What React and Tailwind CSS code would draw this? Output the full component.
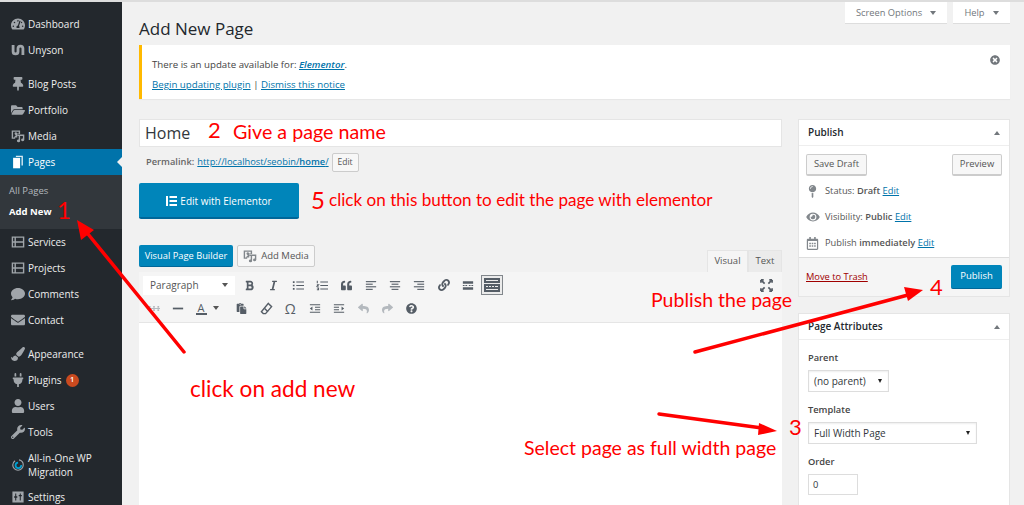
import {
  FaBold, FaItalic, FaQuoteLeft, FaLink,
  FaPaste, FaReply, FaShare, FaQuestionCircle, FaTimesCircle,
  FaTachometerAlt, FaThumbtack, FaFolderOpen, FaComment, FaEnvelope, FaPaintBrush, FaPlug, FaUser, FaWrench,
  FaEye, FaRegCalendarAlt, FaMapPin,
} from 'react-icons/fa';

const MediaIcon = ({ className }) => (
  <svg viewBox="0 0 20 20" className={className} fill="currentColor">
    <path fillRule="evenodd" d="M1 2h12v5H9v5H6v2H1zM3 4v8h1.500l1-2h1V8.500A2 2 0 1 1 9 6.500h2V4z" />
    <path d="M9 8h10v7.500a2.300 2 0 1 1-2-2V10h-4v7a2.300 2 0 1 1-2-2V10H9z" />
  </svg>
);

const FilmIcon = ({ className }) => (
  <svg viewBox="0 0 20 20" className={className} fill="currentColor">
    <path fillRule="evenodd" d="M1 2h18v16H1zM3 4v5h2V4zM7 4v5h10V4zM3 11v5h2v-5zM7 11v5h10v-5z" />
  </svg>
);

const UnysonIcon = ({ className }) => (
  <svg viewBox="0 0 20 20" className={className} fill="none" stroke="currentColor" strokeWidth="4">
    <path d="M3 3v9a3.500 3.500 0 0 0 7 0V8a3.500 3.500 0 0 1 7 0v9" />
  </svg>
);

const MigrationIcon = ({ className }) => (
  <svg viewBox="0 0 20 20" className={className} fill="none">
    <circle cx="10" cy="10" r="7.500" stroke="#a0a5aa" strokeWidth="1.600" strokeDasharray="30 6" />
    <circle cx="10.500" cy="10.500" r="4" stroke="#00a0d2" strokeWidth="2.600" strokeDasharray="18 6" />
  </svg>
);

const SlidersIcon = ({ className }) => (
  <svg viewBox="0 0 20 20" className={className} fill="currentColor">
    <path fillRule="evenodd" d="M2 2h16v16H2zM6 5v4H4.500v2H6v4h1.500v-4H9V9H7.500V5zm6.500 0v2H11v2h1.500v6H14V9h1.500V7H14V5z" />
  </svg>
);

const ElementorIcon = () => (
  <svg viewBox="0 0 12 12" className="w-[12px] h-[12px]" fill="currentColor">
    <path d="M0 1h2v10H0zM3.500 1H11v2H3.500zM3.500 5H11v2H3.500zM3.500 9H11v2H3.500z" />
  </svg>
);

const KitchenSinkIcon = () => (
  <svg viewBox="0 0 16 14" className="w-[16px] h-[14px]" fill="#555d66">
    <path fillRule="evenodd" d="M0 0h16v5H0zM2 2v1h12V2zM0 6h16v8H0zm2 2v1h2V8zm3 0v1h2V8zm3 0v1h2V8zm3 0v1h3V8zM2 11v1h12v-1z" />
  </svg>
);

const PagesIcon = ({ className }) => (
  <svg viewBox="0 0 20 20" className={className} fill="currentColor">
    <path d="M7 1h10v14h-2V3H7z" opacity="0.85" />
    <path d="M3 4h10v15H3z" />
  </svg>
);

// thin line icons of the editor toolbar
const lines = (rows) => ({ className }) => (
  <svg viewBox="0 0 14 12" className={className} fill="none" stroke="currentColor" strokeWidth="1.300">
    {rows.map(([x1, x2, y]) => <path key={y} d={`M${x1} ${y}H${x2}`} />)}
  </svg>
);
const AlignLeft = lines([[1, 13, 1.500], [1, 9, 4.500], [1, 13, 7.500], [1, 9, 10.500]]);
const AlignCenter = lines([[1, 13, 1.500], [3, 11, 4.500], [1, 13, 7.500], [3, 11, 10.500]]);
const AlignRight = lines([[1, 13, 1.500], [5, 13, 4.500], [1, 13, 7.500], [5, 13, 10.500]]);

const ListUl = ({ className }) => (
  <svg viewBox="0 0 14 12" className={className} stroke="currentColor" strokeWidth="1.200" fill="currentColor">
    <path d="M5 2h9M5 6h9M5 10h9" fill="none" />
    <path d="M1 1h2v2H1zM1 5h2v2H1zM1 9h2v2H1z" stroke="none" />
  </svg>
);
const ListOl = ({ className }) => (
  <svg viewBox="0 0 14 12" className={className} stroke="currentColor" strokeWidth="1.200" fill="none">
    <path d="M5 2h9M5 6h9M5 10h9M1.500 0.500v3M1 5h2l-2 2h2M1 9h2v2H1" />
  </svg>
);
const MoreIcon = ({ className }) => (
  <svg viewBox="0 0 14 12" className={className} fill="currentColor">
    <path d="M1 1h12v3H1zM1 8h12v3H1zM1 5.500h2v1H1zM4 5.500h2v1H4zM8 5.500h2v1H8zM11 5.500h2v1h-2z" />
  </svg>
);
const HrIcon = ({ className }) => (
  <svg viewBox="0 0 14 12" className={className} fill="currentColor"><path d="M1 5h12v2H1z" /></svg>
);
const StrikeIcon = ({ className }) => (
  <svg viewBox="0 0 14 12" className={className} fill="currentColor">
    <path d="M0 5.500h14v1.200H0zM1 3h2v2H1zM6 3h2v2H6zM11 3h2v2h-2zM1 7h2v2H1zM6 7h2v2H6zM11 7h2v2h-2z" />
  </svg>
);
const Outdent = ({ className }) => (
  <svg viewBox="0 0 14 12" className={className} fill="currentColor" stroke="currentColor" strokeWidth="1.200">
    <path d="M1 1.500h12M7 4.500h6M7 7.500h6M1 10.500h12" fill="none" />
    <path d="M1 6l3-2.200v4.400z" stroke="none" />
  </svg>
);
const Indent = ({ className }) => (
  <svg viewBox="0 0 14 12" className={className} fill="currentColor" stroke="currentColor" strokeWidth="1.200">
    <path d="M1 1.500h12M1 4.500h6M1 7.500h6M1 10.500h12" fill="none" />
    <path d="M13 6l-3-2.200v4.400z" stroke="none" />
  </svg>
);
const EraserIcon = ({ className }) => (
  <svg viewBox="0 0 14 14" className={className} fill="none" stroke="currentColor" strokeWidth="1.500">
    <path d="M9 1.500 12.500 5 6 12.500H3.500L1.500 10.500z" />
    <path d="M5 7l3.500 3.500" />
  </svg>
);

function MenuItem({ icon: Icon, label, active, badge, sizeClass = 'w-[14px] h-[14px]', tall }) {
  return (
    <div className={`flex items-center pl-[7px] ${tall ? 'h-[39px]' : 'h-[26px]'} ${active ? 'bg-[#0073aa] text-white relative' : 'text-[#eeeeee]'}`}>
      <span className={`w-[21px] flex justify-center shrink-0 ${active ? 'text-white' : 'text-[#a0a5aa]'}`}>
        <Icon className={sizeClass} />
      </span>
      <span className="text-[10px] leading-[14px] whitespace-pre-line">{label}</span>
      {badge && (
        <span className="ml-[4px] w-[13px] h-[13px] rounded-full bg-[#ca4a1f] text-white text-[7.500px] font-semibold flex items-center justify-center">{badge}</span>
      )}
      {active && <span className="absolute right-0 top-[8px] border-y-[5px] border-r-[5px] border-y-transparent border-r-[#f1f1f1]" />}
    </div>
  );
}

function Sidebar() {
  return (
    <aside className="w-[122px] shrink-0 bg-[#23282d] pt-[9px] h-[503px] overflow-hidden">
      <MenuItem icon={FaTachometerAlt} label="Dashboard" />
      <MenuItem icon={UnysonIcon} label="Unyson" />
      <div className="h-[8px]" />
      <MenuItem icon={FaThumbtack} label="Blog Posts" />
      <MenuItem icon={FaFolderOpen} label="Portfolio" />
      <MenuItem icon={MediaIcon} label="Media" />
      <MenuItem icon={PagesIcon} label="Pages" active />
      <div className="bg-[#32373c] h-[54px] pl-[9px] pt-[8px]">
        <div className="text-[9.500px] leading-[16px] text-[#b4b9be]">All Pages</div>
        <div className="text-[9.500px] leading-[16px] mt-[5px] font-bold text-white">Add New</div>
      </div>
      <MenuItem icon={FilmIcon} label="Services" />
      <MenuItem icon={FilmIcon} label="Projects" />
      <MenuItem icon={FaComment} label="Comments" />
      <MenuItem icon={FaEnvelope} label="Contact" />
      <div className="h-[8px]" />
      <MenuItem icon={FaPaintBrush} label="Appearance" />
      <MenuItem icon={FaPlug} label="Plugins" badge="1" />
      <MenuItem icon={FaUser} label="Users" />
      <MenuItem icon={FaWrench} label="Tools" />
      <MenuItem icon={MigrationIcon} label={'All-in-One WP\nMigration'} tall />
      <MenuItem icon={SlidersIcon} label="Settings" />
    </aside>
  );
}

function Tool({ icon: Icon, className = 'w-[11px] h-[11px]', muted }) {
  return (
    <span className={`w-[24.300px] h-[22px] flex items-center justify-center ${muted ? 'text-[#b4b9be]' : 'text-[#555d66]'}`}>
      <Icon className={className} />
    </span>
  );
}

function Editor() {
  return (
    <>
      <div className="flex items-end mt-[26px] h-[27px]">
        <button className="w-[94px] h-[22px] bg-[#0085ba] border-b border-[#006799] rounded-[2px] text-white text-[9.300px] mb-[5px]">Visual Page Builder</button>
        <button className="ml-[4px] w-[78px] h-[22px] bg-[#f7f7f7] border border-[#cccccc] rounded-[2px] text-[#555555] text-[9.500px] mb-[5px] flex items-center justify-center gap-[4px]">
          <MediaIcon className="w-[14px] h-[14px] text-[#82878c]" />
          Add Media
        </button>
        <div className="ml-auto flex">
          <div className="w-[41px] h-[22px] bg-[#f5f5f5] border border-b-0 border-[#e5e5e5] text-[#555555] text-[9.500px] flex items-center justify-center">Visual</div>
          <div className="w-[34px] h-[22px] bg-[#ebebeb] border border-b-0 border-[#e5e5e5] text-[#555555] text-[9.500px] flex items-center justify-center">Text</div>
        </div>
      </div>
      <div className="bg-[#f5f5f5] border-b border-[#e5e5e5] h-[51px] pl-[4px] pr-[9px]">
        <div className="flex items-center h-[24px] pt-[2px]">
          <div className="w-[92px] h-[19px] mr-[2px] bg-white flex items-center justify-between px-[7px] text-[10px] text-[#555555]">
            Paragraph
            <span className="border-x-[3px] border-t-[4px] border-x-transparent border-t-[#555555]" />
          </div>
          <Tool icon={FaBold} />
          <Tool icon={FaItalic} />
          <Tool icon={ListUl} className="w-[12px] h-[11px]" />
          <Tool icon={ListOl} className="w-[12px] h-[11px]" />
          <Tool icon={FaQuoteLeft} />
          <Tool icon={AlignLeft} className="w-[12px] h-[11px]" />
          <Tool icon={AlignCenter} className="w-[12px] h-[11px]" />
          <Tool icon={AlignRight} className="w-[12px] h-[11px]" />
          <Tool icon={FaLink} className="w-[12px] h-[12px]" />
          <Tool icon={MoreIcon} className="w-[12px] h-[11px]" />
          <span className="ml-[1px] w-[22px] h-[20px] border border-[#82878c] bg-[#ebebeb] flex items-center justify-center">
            <KitchenSinkIcon />
          </span>
          <span className="ml-auto text-[#555d66]">
            <svg viewBox="0 0 14 14" className="w-[13px] h-[13px]" fill="none" stroke="currentColor" strokeWidth="1.800">
              <path d="M5 5 1 1M9 5l4-4M5 9l-4 4M9 9l4 4" />
              <path d="M1 1h3M1 1v3M13 1h-3M13 1v3M1 13h3M1 13v-3M13 13h-3M13 13v-3" />
            </svg>
          </span>
        </div>
        <div className="flex items-center h-[24px] -ml-[1px]">
          <Tool icon={StrikeIcon} className="w-[12px] h-[11px]" muted />
          <Tool icon={HrIcon} className="w-[12px] h-[11px]" />
          <span className="w-[39px] h-[22px] pl-[5px] flex items-center gap-[6px] text-[#555d66]">
            <span className="text-[11px] leading-[11px] border-b-2 border-[#555d66] px-[2px]">A</span>
            <span className="border-x-[3px] border-t-[4px] border-x-transparent border-t-[#555555]" />
          </span>
          <Tool icon={FaPaste} />
          <Tool icon={EraserIcon} className="w-[13px] h-[13px]" />
          <span className="w-[24.300px] text-center text-[14px] text-[#555d66]">Ω</span>
          <Tool icon={Outdent} className="w-[12px] h-[11px]" />
          <Tool icon={Indent} className="w-[12px] h-[11px]" />
          <Tool icon={FaReply} muted />
          <Tool icon={FaShare} muted />
          <Tool icon={FaQuestionCircle} />
        </div>
      </div>
      <div className="bg-white h-[220px]" />
    </>
  );
}

function MetaRow({ icon: Icon, iconClass, children }) {
  return (
    <div className="h-[26px] flex items-center text-[9.300px] text-[#555555]">
      <span className="w-[19px] flex justify-start text-[#82878c]">
        <Icon className={iconClass} />
      </span>
      <span>{children}</span>
    </div>
  );
}

const EditLink = () => <a className="text-[#0073aa] underline font-normal">Edit</a>;

function SideSelect({ width, label }) {
  return (
    <div className={`${width} h-[22px] bg-white border border-[#dddddd] flex items-center justify-between pl-[5px] pr-[6px] text-[10px] text-[#32373c] shadow-[inset_0_1px_2px_rgba(0,0,0,0.07)]`}>
      {label}
      <span className="border-x-[2.500px] border-t-[4px] border-x-transparent border-t-[#222222]" />
    </div>
  );
}

function SideColumn() {
  return (
    <div className="w-[212px] shrink-0 ml-[16px]">
      <section className="bg-white border border-[#e5e5e5] h-[178px] flex flex-col">
        <div className="h-[26px] flex items-center justify-between pl-[9px] pr-[9px] border-b border-[#eeeeee] text-[10px] font-semibold text-[#23282d]">
          Publish
          <span className="border-x-[3.500px] border-b-[4px] border-x-transparent border-b-[#72777c]" />
        </div>
        <div className="px-[7px] pt-[8px] flex-1">
          <div className="flex justify-between">
            <button className="w-[61px] h-[22px] bg-[#f7f7f7] border border-[#cccccc] border-b-2 rounded-[2px] text-[#555555] text-[9.400px]">Save Draft</button>
            <button className="w-[50px] h-[22px] bg-[#f7f7f7] border border-[#cccccc] border-b-2 rounded-[2px] text-[#555555] text-[9.400px]">Preview</button>
          </div>
          <div className="mt-[2px]">
            <MetaRow icon={FaMapPin} iconClass="w-[11px] h-[13px] ml-[1px]">Status: <b className="font-semibold">Draft</b> <EditLink /></MetaRow>
            <MetaRow icon={FaEye} iconClass="w-[14px] h-[12px]">Visibility: <b className="font-semibold">Public</b> <EditLink /></MetaRow>
            <MetaRow icon={FaRegCalendarAlt} iconClass="w-[13px] h-[13px]">Publish <b className="font-semibold">immediately</b> <EditLink /></MetaRow>
          </div>
        </div>
        <div className="h-[39px] bg-[#f5f5f5] border-t border-[#dddddd] flex items-center justify-between pl-[7px] pr-[7px]">
          <a className="text-[9.300px] text-[#a00000] underline">Move to Trash</a>
          <button className="w-[51px] h-[24px] bg-[#0085ba] border-b border-[#006799] rounded-[2px] text-white text-[9.500px]">Publish</button>
        </div>
      </section>
      <section className="bg-white border border-[#e5e5e5] mt-[16px] h-[220px]">
        <div className="h-[26px] flex items-center justify-between pl-[9px] pr-[9px] border-b border-[#eeeeee] text-[10px] font-semibold text-[#23282d]">
          Page Attributes
          <span className="border-x-[3.500px] border-b-[4px] border-x-transparent border-b-[#72777c]" />
        </div>
        <div className="pl-[9px] pt-[11px] text-[9.300px] text-[#444444] font-semibold">
          <div className="leading-[14px]">Parent</div>
          <div className="mt-[5px] font-normal"><SideSelect width="w-[81px]" label="(no parent)" /></div>
          <div className="leading-[14px] mt-[11px]">Template</div>
          <div className="mt-[5px] font-normal"><SideSelect width="w-[169px]" label="Full Width Page" /></div>
          <div className="leading-[14px] mt-[11px]">Order</div>
          <div className="mt-[5px] w-[50px] h-[21px] bg-white border border-[#dddddd] pl-[4px] flex items-center font-normal text-[#32373c]">0</div>
        </div>
      </section>
    </div>
  );
}

function Main() {
  return (
    <main className="flex-1 min-w-0 pl-[17px] pr-[14px] overflow-hidden">
      <div className="flex justify-end gap-[6px] h-[22px]">
        <div className="w-[102px] h-[22px] bg-white border-b border-[#dddddd] flex items-center justify-center gap-[8px] text-[9.300px] text-[#72777c]">
          Screen Options
          <span className="border-x-[3.500px] border-t-[4px] border-x-transparent border-t-[#72777c]" />
        </div>
        <div className="w-[57px] h-[22px] bg-white border-b border-[#dddddd] flex items-center justify-center gap-[8px] text-[9.300px] text-[#72777c]">
          Help
          <span className="border-x-[3.500px] border-t-[4px] border-x-transparent border-t-[#72777c]" />
        </div>
      </div>
      <h1 className="text-[17px] leading-[22px] mt-[-6px] text-[#23282d]">Add New Page</h1>
      <div className="bg-white border-l-[3px] border-[#ffb900] h-[54px] mt-[5px] pl-[10px] pr-[10px] pt-[12px] relative shadow-[0_1px_1px_rgba(0,0,0,0.04)] text-[9.700px] text-[#444444]">
        <p className="leading-[16px]">There is an update available for: <a className="italic font-semibold text-[#0073aa] underline">Elementor</a>.</p>
        <p className="leading-[16px] mt-[4px]"><a className="text-[#0073aa] underline">Begin updating plugin</a> | <a className="text-[#0073aa] underline">Dismiss this notice</a></p>
        <FaTimesCircle className="absolute right-[10px] top-[10px] w-[10px] h-[10px] text-[#72777c]" />
      </div>
      <div className="flex mt-[20px]">
        <div className="flex-1 min-w-0">
          <div className="h-[28px] bg-white border border-[#e5e5e5] flex items-center pl-[5px] text-[16px] text-[#32373c]">Home</div>
          <div className="flex items-center h-[20px] mt-[5px] pl-[7px] text-[9.300px] text-[#666666]">
            <b className="font-semibold">Permalink:</b>
            <a className="ml-[3px] text-[#0073aa] underline">http://localhost/seobin/<b className="font-semibold">home</b>/</a>
            <button className="ml-[3px] w-[27px] h-[19px] bg-[#f7f7f7] border border-[#cccccc] rounded-[2px] text-[8.500px] text-[#555555]">Edit</button>
          </div>
          <button className="mt-[11px] w-[160px] h-[36px] pt-[2px] bg-[#0085ba] border-b-2 border-[#006799] rounded-[2px] text-white text-[10px] flex items-center justify-center gap-[2px]">
            <ElementorIcon />
            Edit with Elementor
          </button>
          <Editor />
        </div>
        <SideColumn />
      </div>
    </main>
  );
}

const notes = [
  { text: '1', cls: 'left-[57px] top-[194px] text-[24px]' },
  { text: '2', cls: 'left-[208px] top-[115px] text-[22px]' },
  { text: 'Give a page name', cls: 'left-[233px] top-[118px] text-[19.700px]' },
  { text: '5', cls: 'left-[311px] top-[184px] text-[24px]' },
  { text: 'click on this button to edit the page with elementor', cls: 'left-[329px] top-[188px] text-[17.100px]' },
  { text: 'Publish the page', cls: 'left-[651px] top-[286px] text-[19.500px]' },
  { text: '4', cls: 'left-[930px] top-[272px] text-[22px]' },
  { text: 'click on add new', cls: 'left-[190px] top-[373px] text-[22.600px]' },
  { text: 'Select page as full width page', cls: 'left-[524px] top-[434px] text-[19.500px]' },
  { text: '3', cls: 'left-[789px] top-[412px] text-[22px]' },
];

export default function App() {
  return (
    <div className="relative w-[1024px] h-[505px] overflow-hidden bg-[#f1f1f1] border-t-2 border-[#dddddd] font-['Open_Sans',sans-serif]">
      <div className="flex">
        <Sidebar />
        <Main />
      </div>
      {notes.map((n) => (
        <span key={n.text} className={`absolute whitespace-nowrap text-[#ff0000] leading-[1.2] font-['Lato',sans-serif] ${n.cls}`}>{n.text}</span>
      ))}
      <svg className="absolute left-0 top-[-2px] w-[1024px] h-[505px] pointer-events-none" viewBox="0 0 1024 505" fill="none">
        <path d="M184 352 88 234" stroke="#ff0000" strokeWidth="3.500" strokeLinecap="round" />
        <path d="M77 220 81 240 94 230z" fill="#ff0000" />
        <path d="M695 352 908 295" stroke="#ff0000" strokeWidth="3.500" strokeLinecap="round" />
        <path d="M923 290 904 287 908 301z" fill="#ff0000" />
        <path d="M659 414 762 428" stroke="#ff0000" strokeWidth="3.500" strokeLinecap="round" />
        <path d="M777 431 759 423 758 435z" fill="#ff0000" />
      </svg>
    </div>
  );
}
